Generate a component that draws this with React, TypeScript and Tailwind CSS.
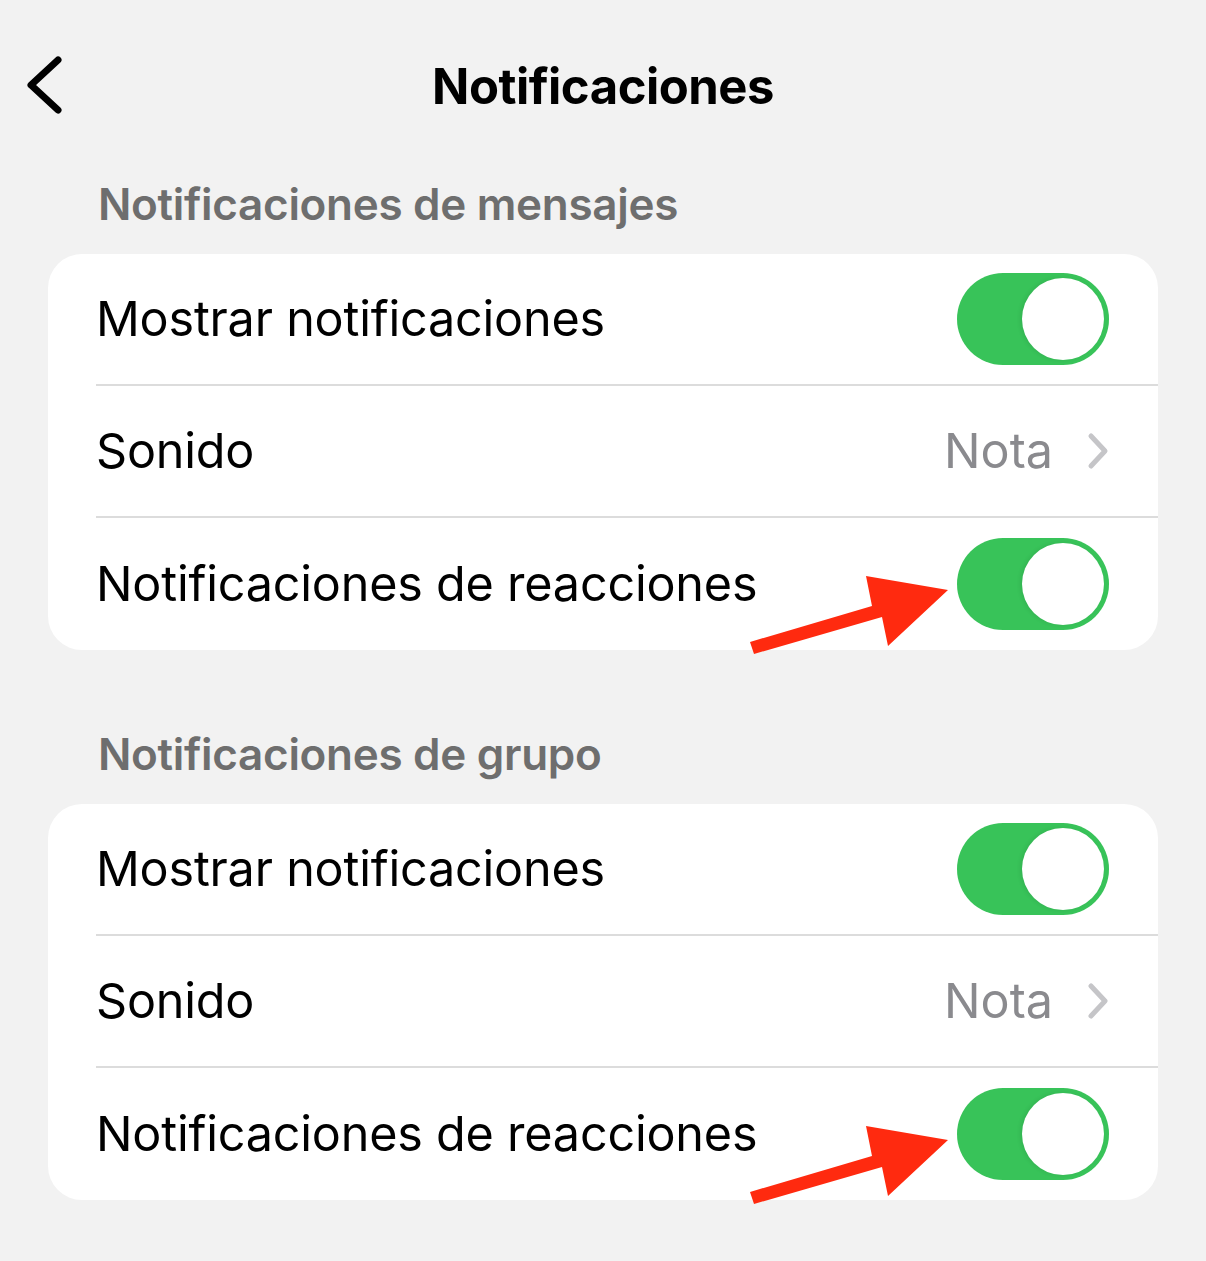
import React from 'react';

type Row =
  | { kind: 'toggle'; label: string; on: boolean; pointer?: boolean }
  | { kind: 'link'; label: string; value: string };

const sections: { title: string; rows: Row[] }[] = [
  {
    title: 'Notificaciones de mensajes',
    rows: [
      { kind: 'toggle', label: 'Mostrar notificaciones', on: true },
      { kind: 'link', label: 'Sonido', value: 'Nota' },
      { kind: 'toggle', label: 'Notificaciones de reacciones', on: true, pointer: true },
    ],
  },
  {
    title: 'Notificaciones de grupo',
    rows: [
      { kind: 'toggle', label: 'Mostrar notificaciones', on: true },
      { kind: 'link', label: 'Sonido', value: 'Nota' },
      { kind: 'toggle', label: 'Notificaciones de reacciones', on: true, pointer: true },
    ],
  },
];

const Toggle: React.FC<{ on: boolean }> = ({ on }) => (
  <div className={`w-[152px] h-[92px] rounded-full flex items-center px-[5px] ${on ? 'bg-[#38c359] justify-end' : 'bg-[#e5e5ea] justify-start'}`}>
    <div className="w-[82px] h-[82px] rounded-full bg-white shadow-[-2px_0_4px_rgba(0,0,0,0.08)]" />
  </div>
);

// red callout arrow pointing at the switch (coords relative to the switch box)
const PointerArrow = () => (
  <svg className="absolute left-[-217px] top-[22px] pointer-events-none" width="220" height="100" viewBox="740 560 220 100">
    <polygon points="750,642 754,654 882,617 888,646 948,590 866,576 872,606" fill="#ff2a0f" />
  </svg>
);

const SettingsRow: React.FC<{ row: Row; last: boolean }> = ({ row, last }) => (
  <div className="pl-12">
    <div className={`h-[132px] flex items-center justify-between pr-[49px] ${last ? '' : 'border-b-2 border-[#dcdcdc]'}`}>
      <span className="text-[48.5px] text-black tracking-[-0.2px]">{row.label}</span>
      {row.kind === 'toggle' ? (
        <div className="relative">
          {row.pointer && <PointerArrow />}
          <Toggle on={row.on} />
        </div>
      ) : (
        <div className="flex items-center gap-[34px]">
          <span className="text-[48.5px] text-[#8a8a8e]">{row.value}</span>
          <svg width="22" height="38" viewBox="0 0 22 38" fill="none">
            <polyline points="4,4 18,19 4,34" stroke="#c5c5c8" strokeWidth="5" strokeLinecap="round" strokeLinejoin="round" />
          </svg>
        </div>
      )}
    </div>
  </div>
);

export default function App() {
  return (
    <div className="w-[1206px] h-[1261px] bg-[#f2f2f2] font-['Inter',sans-serif] overflow-hidden">
      <header className="relative h-[174px] flex items-center justify-center">
        <svg className="absolute left-[22px] top-[52px]" width="48" height="66" viewBox="0 0 48 66" fill="none">
          <polyline points="36,8 9,33 36,58" stroke="#000" strokeWidth="7" strokeLinecap="round" strokeLinejoin="round" />
        </svg>
        <h1 className="text-[49px] font-bold text-black tracking-[-0.5px]">Notificaciones</h1>
      </header>
      {sections.map((s, i) => (
        <section key={s.title} className={i > 0 ? 'mt-[74px]' : ''}>
          <h2 className="px-[98px] h-[60px] leading-[60px] text-[44px] font-semibold text-[#6e6e6e] tracking-[-0.3px]">{s.title}</h2>
          <div className="mt-5 mx-12 bg-white rounded-[34px]">
            {s.rows.map((r, j) => (
              <SettingsRow key={j} row={r} last={j === s.rows.length - 1} />
            ))}
          </div>
        </section>
      ))}
    </div>
  );
}
